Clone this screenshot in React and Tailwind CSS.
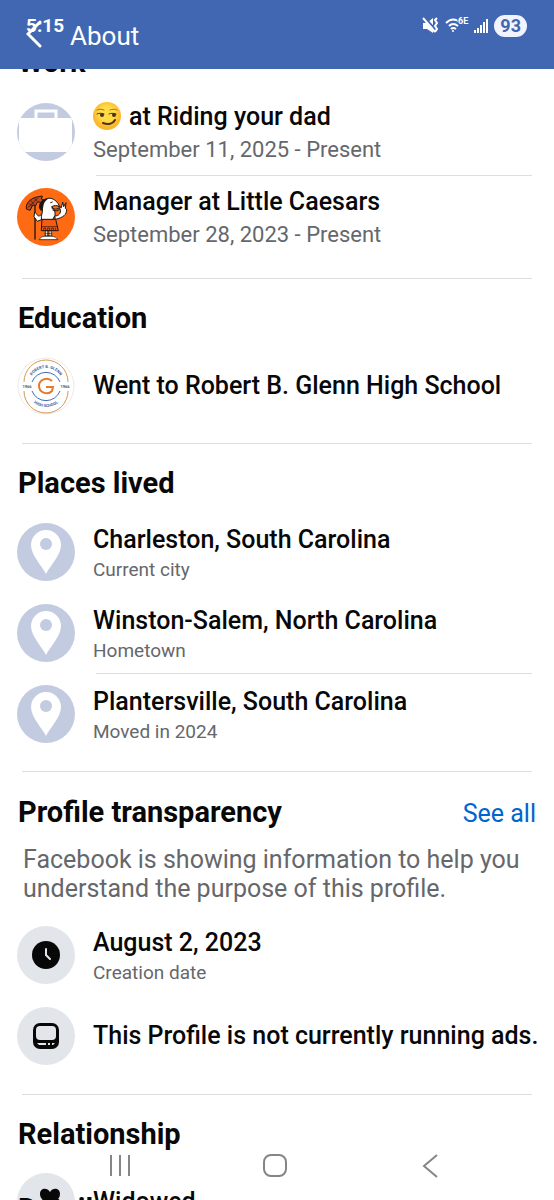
const Row = ({ icon, title, note, big, className = '' }) => (
    <div className={`flex items-center gap-[18px] ${className}`}>
        {icon}
        <div className="min-w-0 flex-1">
            <h3 className="whitespace-nowrap text-[25px] leading-[36px] font-medium text-[#080809]">{title}</h3>
            {note && (
                <p className={`text-[#65676b] ${big ? 'text-[22px] leading-[30px]' : 'text-[19px] leading-[24px]'}`}>
                    {note}
                </p>
            )}
        </div>
    </div>
);

const Heading = ({ children }) => (
    <h2 className="ml-px text-[29px] leading-[40px] font-bold text-[#080809]">{children}</h2>
);

const Section = ({ children, className = '' }) => (
    <section className={`relative pr-[18px] pl-[17px] ${className}`}>
        {children}
        <hr className="mr-1 ml-[5px] border-[#dddddf]" />
    </section>
);

const Grey = ({ children }) => (
    <div className="flex size-[58px] shrink-0 items-center justify-center rounded-full bg-[#e2e5e9]">{children}</div>
);

const Briefcase = () => (
    <svg viewBox="0 0 58 58" className="size-[58px] shrink-0" aria-hidden="true">
        <clipPath id="case-clip"><circle cx="29" cy="29" r="29" /></clipPath>
        <circle cx="29" cy="29" r="29" fill="#c3cbe1" />
        <g clipPath="url(#case-clip)">
            <rect x="2" y="15" width="53" height="34" rx="2" fill="#fff" />
            <path d="M19 17V8h20v9" fill="none" stroke="#fff" strokeWidth="3" />
        </g>
    </svg>
);

const Pin = () => (
    <svg viewBox="0 0 58 58" className="size-[58px] shrink-0" aria-hidden="true">
        <circle cx="29" cy="29" r="29" fill="#c3cbe1" />
        <path d="M29 51C25 43 14 32 14 22a15 15 0 0 1 30 0C44 32 33 43 29 51Z" fill="#fff" />
        <circle cx="29" cy="21" r="6" fill="#c3cbe1" />
    </svg>
);

const Caesar = () => (
    <svg viewBox="0 0 174 174" className="size-[58px] shrink-0" aria-hidden="true">
        <circle cx="87" cy="87" r="87" fill="#ff6a13" />
        <g stroke="#1d1713" strokeWidth="3" strokeLinecap="round" strokeLinejoin="round">
            <path d="M54 48v105" strokeWidth="4" fill="none" />
            <path d="M28 62c-3-18 14-32 36-36l12-2-3 9 6 2-8 9-9-3-6 12-9-2-7 15Z" fill="#c2491b" />
            <path d="M34 58l28-28M40 36l10 12M36 46l8 8M52 30l6 8" strokeWidth="2" fill="none" />
            {/* arm on the staff */}
            <path d="M74 78c-6 8-11 8-15 0l-6-6-2 14 10 14 14-6" fill="#fff" />
            {/* head and body */}
            <path d="M76 58c-2-18 10-30 26-27 13 3 20 12 26 24-9-3-17-3-24 1 7 5 12 17 10 26l-8 14H74c-5-12 6-22 2-38Z" fill="#fff" />
            <path d="M67 58c0-15 10-25 24-25-9 6-13 14-14 25l-4 9Z" fill="#1d1713" />
            <path d="M101 44l5-2M104 60c10 6 22 4 31-6M107 66c8 4 14 3 20-1" fill="none" />
            {/* raised hand */}
            <path d="M114 84c12 0 18-8 16-20l-6-9 9 4 4-17 3 14 7-12-2 17 4 3c0 17-10 24-33 30Z" fill="#fff" />
            {/* tunic */}
            <path d="M76 94h40l8 34H74Z" fill="#f65b14" />
            <path d="M76 116h46M80 126v-6h6v6M92 126v-6h6v6M104 126v-6h6v6M116 126v-6" strokeWidth="2" fill="none" />
            {/* legs and sandals */}
            <path d="M86 129h6v18h-6ZM97 129h6v18h-6Z" fill="#fff" strokeWidth="2" />
            <path d="M84 136h21M84 142h21" strokeWidth="2" />
            <path d="M67 154c2-6 10-9 17-9h20c7 0 15 3 18 9Z" fill="#fff" strokeWidth="2" />
        </g>
    </svg>
);

const Glenn = () => (
    <svg viewBox="0 0 58 58" className="size-[58px] shrink-0" aria-hidden="true">
        <circle cx="29" cy="29" r="28" fill="#fff" stroke="#ebebeb" />
        <g fill="none">
            <path d="M7 25a22 22 0 0 1 44 0M7 34a22 22 0 0 0 44 0" stroke="#d49a4e" strokeWidth="1" />
            <path d="M15 25a15 15 0 0 1 28 0M15 34a15 15 0 0 0 28 0" stroke="#416cae" strokeWidth="1" />
            <path id="seal-top" d="M12 28a17 17 0 0 1 34 0" />
            <path id="seal-bottom" d="M9 30a20 20 0 0 0 40 0" />
            <path d="M35 24c-5-5-13-1-13 5s8 10 13 5l1-4h-7" stroke="#e4792b" strokeWidth="2" />
        </g>
        <g fill="#315b9d" fontSize="4" fontWeight="700" textAnchor="middle">
            <text><textPath href="#seal-top" startOffset="50%">ROBERT B. GLENN</textPath></text>
            <text><textPath href="#seal-bottom" startOffset="50%">HIGH SCHOOL</textPath></text>
            <text x="10" y="31" fill="#555">1966</text>
            <text x="48" y="31" fill="#555">1966</text>
        </g>
    </svg>
);

const Smirk = () => (
    <svg viewBox="0 0 28 28" className="mr-2 inline size-7 align-[-5px]" role="img" aria-label="Smirking face">
        <defs>
            <radialGradient id="face" cx="50%" cy="42%">
                <stop offset="0.5" stopColor="#ffdc47" />
                <stop offset="1" stopColor="#fbb52b" />
            </radialGradient>
        </defs>
        <circle cx="14" cy="14" r="14" fill="url(#face)" />
        <g fill="none" strokeLinecap="round">
            <path d="M4 8c2-1 4-1 7 0M17 8c2-1 5-1 7 0" stroke="#b96d1d" strokeWidth="1" />
            <path d="M4 12c2-1 4-1 7 0M16 12c2-1 4-1 7 0" stroke="#4c3218" strokeWidth="1" />
            <path d="M10 21c5 2 10 1 12-3" stroke="#4c3218" strokeWidth="2" />
        </g>
        <circle cx="9" cy="13" r="2" fill="#4c3218" />
        <circle cx="21" cy="13" r="2" fill="#4c3218" />
    </svg>
);

const StatusIcons = () => (
    <div className="flex items-center">
        <svg viewBox="0 0 68 20" className="mr-1 h-5 w-[68px]" aria-label="Muted, Wi-Fi 6E, mobile signal">
            <path d="M1 7h4l6-5v15l-6-4H1Z" fill="#fff" />
            <path d="M3 2l12 13" stroke="#4267b2" strokeWidth="2" />
            <path d="M1 2l12 14" fill="none" stroke="#fff" strokeWidth="2" />
            <path d="M15 2l-2 2 2 3-2 3 2 3-2 3" fill="none" stroke="#fff" strokeWidth="2" />
            <path d="M24 7q7-7 15 0M27 10q4-4 9 0M29 13q2-2 5 0" fill="none" stroke="#fff" strokeWidth="2" />
            <circle cx="31" cy="15" r="1" fill="#fff" />
            <path d="M35 0h12v9H36Z" fill="#4267b2" />
            <text x="36" y="8" fill="#fff" fontSize="9" fontWeight="700">6E</text>
            <path d="M53 17v-3M56 17v-5M59 17V9M62 17V6M65 17V3" stroke="#fff" strokeWidth="2" />
        </svg>
        <span className="rounded-full bg-[#f1f4ff] px-[6px] text-[18px] leading-[22px] font-bold text-[#4267b2]">93</span>
    </div>
);

const places = [
    { title: 'Charleston, South Carolina', note: 'Current city' },
    { title: 'Winston-Salem, North Carolina', note: 'Hometown' },
    { title: 'Plantersville, South Carolina', note: 'Moved in 2024' },
];

export default function App() {
    return (
        <div className="relative h-screen overflow-hidden bg-white font-[Roboto,sans-serif]">
            <header className="relative z-10 h-[69px] bg-[#4267b2] text-white">
                <div className="flex items-center justify-between pt-[15px] pr-[27px] pl-[26px]">
                    <time className="text-[19px] leading-[22px] font-bold">5:15</time>
                    <StatusIcons />
                </div>
                <button aria-label="Back" className="absolute top-[19px] left-[26px]">
                    <svg viewBox="0 0 16 30" className="h-[30px] w-4" fill="none" stroke="currentColor" strokeWidth="3" strokeLinecap="round">
                        <path d="M14 3 2 15l12 12" />
                    </svg>
                </button>
                <h1 className="absolute top-[18px] left-[70px] text-[26px] leading-[36px]">About</h1>
            </header>

            <main>
                <Section className="-mt-[27px]">
                    <Heading>Work</Heading>
                    <Row
                        icon={<Briefcase />}
                        title={<><Smirk />at Riding your dad</>}
                        note="September 11, 2025 - Present"
                        big
                        className="mt-[17px]"
                    />
                    <hr className="mt-[10px] mr-1 mb-2 ml-[79px] border-[#dddddf]" />
                    <Row icon={<Caesar />} title="Manager at Little Caesars" note="September 28, 2023 - Present" big className="mb-7" />
                </Section>

                <Section>
                    <div className="pt-[19px]"><Heading>Education</Heading></div>
                    <Row icon={<Glenn />} title="Went to Robert B. Glenn High School" className="mt-[19px] mb-7" />
                </Section>

                <Section>
                    <div className="pt-[19px]"><Heading>Places lived</Heading></div>
                    <div className="mt-[19px] mb-[27px]">
                        {places.map((place, i) => (
                            <div key={place.title}>
                                {i === 2 && <hr className="-mt-[11px] mr-1 mb-[10px] ml-[79px] border-[#dddddf]" />}
                                <Row icon={<Pin />} title={place.title} note={place.note} className={i < 2 ? 'mb-[21px]' : ''} />
                            </div>
                        ))}
                    </div>
                </Section>

                <Section>
                    <div className="flex items-end justify-between pt-5">
                        <Heading>Profile transparency</Heading>
                        <a href="#transparency" className="text-[25px] leading-[36px] text-[#0064d1]">See all</a>
                    </div>
                    <p className="mt-[13px] ml-[6px] text-[25px] leading-[29px] text-[#65676b]">
                        Facebook is showing information to help you understand the purpose of this profile.
                    </p>
                    <Row
                        icon={
                            <Grey>
                                <svg viewBox="0 0 28 28" className="size-7" aria-hidden="true">
                                    <circle cx="14" cy="14" r="14" fill="#080809" />
                                    <path d="M14 8v6l4 4" fill="none" stroke="#e2e5e9" strokeWidth="2" strokeLinecap="round" />
                                </svg>
                            </Grey>
                        }
                        title="August 2, 2023"
                        note="Creation date"
                        className="mt-[22px]"
                    />
                    <Row
                        icon={
                            <Grey>
                                <svg viewBox="0 0 28 28" className="size-7" aria-hidden="true">
                                    <rect x="1" y="1" width="26" height="26" rx="7" fill="#080809" />
                                    <rect x="4" y="4" width="20" height="14" rx="4" fill="#e2e5e9" />
                                    <path d="M5 21h9v2H7ZM16 21h2v2h-2ZM20 21h3l-2 2h-1Z" fill="#e2e5e9" />
                                </svg>
                            </Grey>
                        }
                        title="This Profile is not currently running ads."
                        className="mt-[22px] mb-[29px]"
                    />
                </Section>

                <section className="relative px-[17px] pt-[19px]">
                    <Heading>Relationship</Heading>
                    <Row
                        icon={
                            <Grey>
                                <svg viewBox="0 0 28 28" className="ml-2 size-7" aria-hidden="true">
                                    <path d="M14 4C11-1 4 0 4 6c0 5 5 8 10 13 5-5 10-8 10-13 0-6-7-7-10-2Z" fill="#080809" />
                                </svg>
                            </Grey>
                        }
                        title="Widowed"
                        className="mt-[19px]"
                    />
                    <div className="absolute top-[94px] left-[17px]"><Heading>Details</Heading></div>
                </section>
            </main>

            <nav className="absolute inset-x-0 bottom-[21px] flex justify-around pr-[47px] pl-[42px] text-[#858585]">
                <button aria-label="Recent apps">
                    <svg viewBox="0 0 28 28" className="size-7" stroke="currentColor" strokeWidth="2"><path d="M5 4v21M14 4v21M23 4v21" /></svg>
                </button>
                <button aria-label="Home">
                    <svg viewBox="0 0 28 28" className="size-7" fill="none" stroke="currentColor" strokeWidth="2"><rect x="3" y="4" width="22" height="21" rx="7" /></svg>
                </button>
                <button aria-label="Go back">
                    <svg viewBox="0 0 28 28" className="size-7" fill="none" stroke="currentColor" strokeWidth="2"><path d="M21 4 8 15l13 11" /></svg>
                </button>
            </nav>
        </div>
    );
}
